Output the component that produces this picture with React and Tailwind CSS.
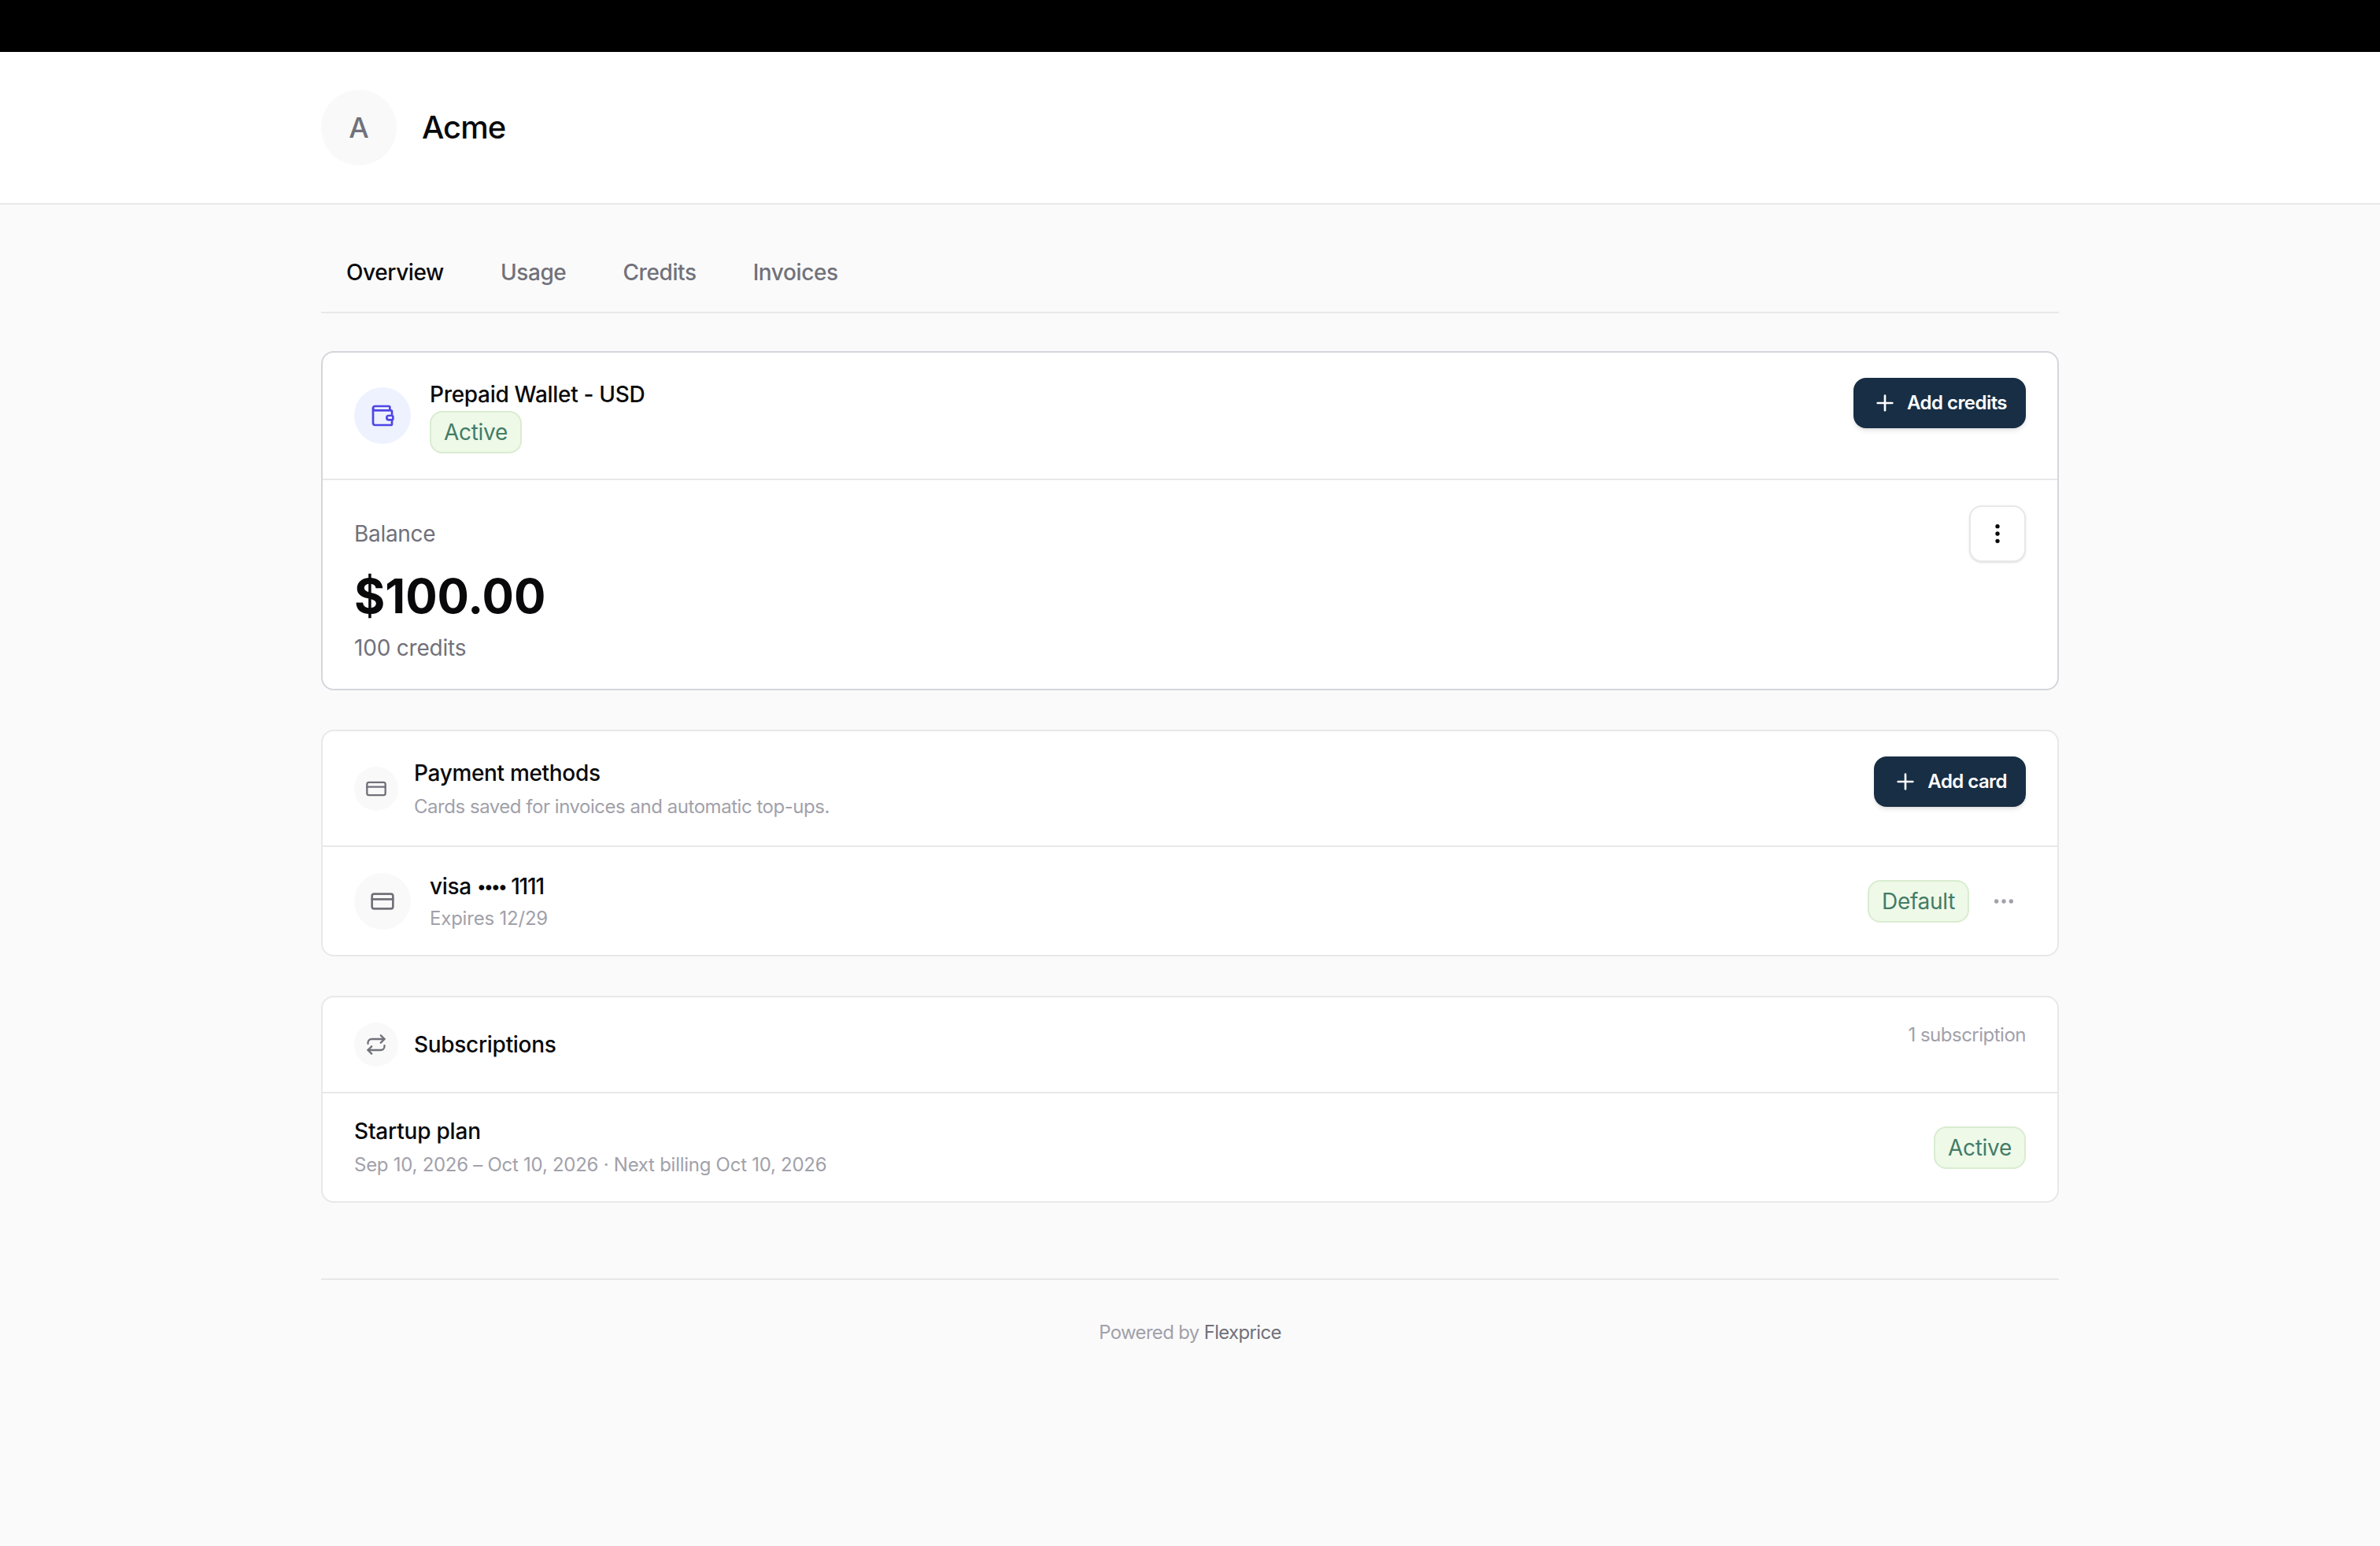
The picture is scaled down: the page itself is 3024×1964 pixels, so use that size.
import { CreditCard, MoreHorizontal, MoreVertical, Plus, Repeat, Wallet } from 'lucide-react'

function Badge({ children }) {
  return (
    <span className="inline-flex h-[54px] items-center rounded-[16px] border-2 border-[#d9ecd0] bg-[#eff9e8] px-4 text-[28px] tracking-[-0.3px] text-[#437c67]">
      {children}
    </span>
  )
}

function PrimaryButton({ children }) {
  return (
    <button
      type="button"
      className="flex h-[64px] items-center gap-3 rounded-[16px] bg-[#172e44] px-6 text-[24px] font-semibold tracking-[-0.55px] text-white shadow-md"
    >
      <Plus size={32} />
      {children}
    </button>
  )
}

function IconCircle({ small, children }) {
  return (
    <div
      className={`flex shrink-0 items-center justify-center rounded-full bg-[#f9f9f9] text-[#71717a] ${
        small ? 'h-[56px] w-[56px]' : 'h-[72px] w-[72px]'
      }`}
    >
      {children}
    </div>
  )
}

const tabs = ['Overview', 'Usage', 'Credits', 'Invoices']

export default function App() {
  return (
    <div className="min-h-[1964px] bg-[#fafafa] font-['Inter',sans-serif] text-[#09090b]">
      <div className="h-[66px] bg-black" />

      {/* header */}
      <header className="border-b-2 border-[#e8e8e8] bg-white">
        <div className="mx-auto flex w-[2304px] items-center gap-8 px-12 py-12">
          <div className="flex h-[96px] w-[96px] items-center justify-center rounded-full bg-[#f9f9f9] text-[36px] font-medium text-[#71717a]">
            A
          </div>
          <h1 className="text-[40px] font-medium tracking-[-1px]">Acme</h1>
        </div>
      </header>

      <main className="mx-auto w-[2304px] px-12 pt-8">
        {/* tabs */}
        <nav className="flex gap-2 border-b-2 border-[#e8e8e8]">
          {tabs.map((t, i) => (
            <span
              key={t}
              className={`px-8 pt-[34px] pb-[30px] text-[28px] leading-[40px] font-medium tracking-[-0.4px] ${
                i === 0 ? 'text-[#09090b]' : 'text-[#71717a]'
              }`}
            >
              {t}
            </span>
          ))}
        </nav>

        <div className="mt-12 flex flex-col gap-[50px]">
          {/* wallet */}
          <section className="rounded-[16px] border-2 border-[#d4d6dc] bg-white">
            <div className="flex items-start justify-between border-b-2 border-[#e8e8e8] px-10 py-8">
              <div className="flex items-center gap-6">
                <div className="flex h-[72px] w-[72px] items-center justify-center rounded-full bg-[#eef2ff] text-[#4f46e5]">
                  <Wallet size={32} />
                </div>
                <div className="flex flex-col items-start">
                  <div className="text-[28px] leading-[42px] font-medium tracking-[-0.3px]">Prepaid Wallet - USD</div>
                  <Badge>Active</Badge>
                </div>
              </div>
              <PrimaryButton>Add credits</PrimaryButton>
            </div>
            <div className="flex items-start justify-between px-10 pt-8 pb-8">
              <div className="pt-4">
                <div className="text-[28px] leading-[40px] tracking-[-0.3px] text-[#71717a]">Balance</div>
                <div className="mt-[23px] text-[60px] leading-[72px] font-bold">$100.00</div>
                <div className="mt-[10px] text-[28px] leading-[40px] tracking-[-0.2px] text-[#71717a]">100 credits</div>
              </div>
              <button
                type="button"
                className="flex h-[72px] w-[72px] items-center justify-center rounded-[16px] border-2 border-[#e8e8e8] bg-white shadow-sm"
              >
                <MoreVertical size={32} />
              </button>
            </div>
          </section>

          {/* payment methods */}
          <section className="rounded-[16px] border-2 border-[#e8e8e8] bg-white">
            <div className="flex items-start justify-between border-b-2 border-[#e8e8e8] px-10 py-8">
              <div className="flex items-center gap-5">
                <IconCircle small>
                  <CreditCard size={28} />
                </IconCircle>
                <div>
                  <div className="text-[28px] leading-[42px] font-medium tracking-[-0.33px]">Payment methods</div>
                  <div className="mt-1 text-[24px] leading-[35px] tracking-[-0.47px] text-[#a1a1aa]">
                    Cards saved for invoices and automatic top-ups.
                  </div>
                </div>
              </div>
              <PrimaryButton>Add card</PrimaryButton>
            </div>
            <div className="flex h-[137px] items-center justify-between px-10">
              <div className="flex items-center gap-6">
                <IconCircle>
                  <CreditCard size={32} />
                </IconCircle>
                <div>
                  <div className="text-[28px] leading-[40px] font-medium tracking-[-0.3px]">
                    visa <span className="align-[2px] text-[22px] tracking-[-2.75px]">••••</span>{' '}
                    <span className="tracking-[-1.2px]">1111</span>
                  </div>
                  <div className="mt-[5px] text-[24px] leading-[32px] tracking-[-0.2px] text-[#a1a1aa]">Expires 12/29</div>
                </div>
              </div>
              <div className="flex items-center gap-4">
                <Badge>Default</Badge>
                <button type="button" className="flex h-[56px] w-[56px] items-center justify-center text-[#a1a1aa]">
                  <MoreHorizontal size={32} />
                </button>
              </div>
            </div>
          </section>

          {/* subscriptions */}
          <section className="rounded-[16px] border-2 border-[#e8e8e8] bg-white">
            <div className="flex items-start justify-between border-b-2 border-[#e8e8e8] px-10 py-8">
              <div className="flex items-center gap-5">
                <IconCircle small>
                  <Repeat size={28} />
                </IconCircle>
                <div className="text-[28px] leading-[40px] font-medium tracking-[-0.3px]">Subscriptions</div>
              </div>
              <div className="text-[24px] leading-[32px] tracking-[-0.5px] text-[#a1a1aa]">1 subscription</div>
            </div>
            <div className="flex h-[137px] items-center justify-between px-10">
              <div className="pb-[2px]">
                <div className="text-[28px] leading-[40px] font-medium tracking-[-0.2px]">Startup plan</div>
                <div className="mt-[7px] text-[24px] leading-[32px] tracking-[-0.27px] text-[#a1a1aa]">
                  Sep 10, 2026 – Oct 10, 2026 · Next billing Oct 10, 2026
                </div>
              </div>
              <Badge>Active</Badge>
            </div>
          </section>
        </div>

        {/* footer */}
        <footer className="mt-[96px] border-t-2 border-[#e8e8e8] pt-[49px] text-center text-[24px] leading-[36px] tracking-[-0.68px] text-[#a1a1aa]">
          Powered by <span className="text-[#71717a]">Flexprice</span>
        </footer>
      </main>
    </div>
  )
}
